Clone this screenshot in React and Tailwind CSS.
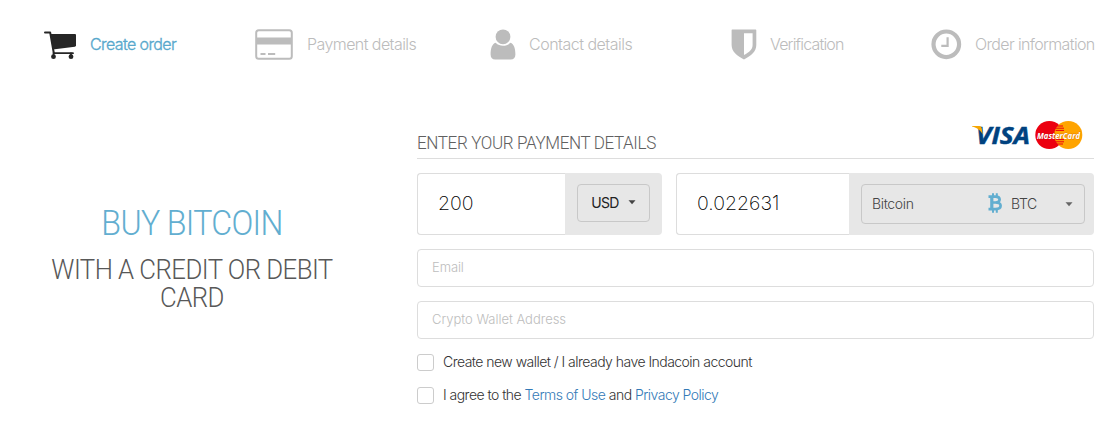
import { useState } from 'react';

function CartIcon() {
  return (
    <svg width="33" height="31" viewBox="0 0 33 31" fill="#262626">
      <path d="M1 3.6H6.2L9.8 24" fill="none" stroke="#262626" strokeWidth="2" strokeLinecap="round" strokeLinejoin="round" />
      <path d="M6.4 5H31Q32 5 32 6.1V16.3Q32 17.6 30.8 17.8L8.8 20.4Z" />
      <path d="M9.6 24.2H29M9.6 24V26.5M27 24V26.5" fill="none" stroke="#262626" strokeWidth="1.8" strokeLinecap="round" />
      <circle cx="9.5" cy="27.7" r="2.4" />
      <circle cx="27" cy="27.7" r="2.4" />
    </svg>
  );
}

function CardIcon() {
  return (
    <svg width="38" height="31" viewBox="0 0 38 31" fill="#bcbcbc">
      <rect x="1.2" y="1.2" width="35.6" height="28.6" rx="2.5" fill="none" stroke="#bcbcbc" strokeWidth="2" />
      <path d="M1 8.5h36v7H1zM5.5 24h5v2h-5zM13 24h7.2v2H13z" />
    </svg>
  );
}

function PersonIcon() {
  return (
    <svg width="26" height="31" viewBox="0 0 26 31" fill="#bcbcbc">
      <circle cx="13" cy="7.8" r="7.4" />
      <path d="M5.6 13.8C8 16 10.2 16.7 13 16.7S18 16 20.4 13.8C24 15 25.4 19.5 25.4 25.5C25.4 28.7 23.5 30.5 20.8 30.5H5.2C2.4 30.5.6 28.7.6 25.5C.6 19.5 2 15 5.6 13.8Z" />
    </svg>
  );
}

function ShieldIcon() {
  return (
    <svg width="26" height="31" viewBox="0 0 26 31" fill="#bcbcbc">
      <path fillRule="evenodd" d="M1.2.5H24.6Q25.3.5 25.3 1.2V16C25.3 22.5 20.2 26.8 13 30.5C5.8 26.8.6 22.5.6 16V1.2Q.6.5 1.2.5ZM13 4.2V26C18.5 23 21.6 20.4 21.6 16V4.2Z" />
    </svg>
  );
}

function ClockIcon() {
  return (
    <svg width="31" height="31" viewBox="0 0 31 31" fill="none" stroke="#bcbcbc">
      <circle cx="15.3" cy="15.3" r="12.8" strokeWidth="4.2" />
      <path d="M16.6 8.3V16.8H10.3" strokeWidth="2.2" />
    </svg>
  );
}

function BitcoinIcon() {
  return (
    <svg width="15" height="20" viewBox="0 0 15 20" fill="none" stroke="#62aed0">
      <path d="M.5 3.7H7.5C13 3.7 13 9.5 7.5 9.5H4.4M7.5 9.5C14.3 9.5 14.3 16.1 7.5 16.1H.5" strokeWidth="2.7" />
      <path d="M3.8 3V17" strokeWidth="3.2" />
      <path d="M5 .3V3.5M8.8 .3V3.5M5 16.5V19.7M8.8 16.5V19.7" strokeWidth="2" />
    </svg>
  );
}

function CardLogos() {
  return (
    <svg width="111" height="30" viewBox="0 0 111 30" className="overflow-visible">
      <g fontFamily="'Open Sans', sans-serif" fontStyle="italic" fontWeight="700">
        <text x="4" y="23.5" fontSize="24" textLength="54" lengthAdjust="spacingAndGlyphs" fill="#00427f" stroke="#00427f" strokeWidth=".5">VISA</text>
        <path d="M0 6H7.2Q9.3 6 9.7 8L10.8 14.5C8.6 10.6 5.4 7.8 0 6.6Z" fill="#f7a600" />
        <circle cx="77.3" cy="15" r="14" fill="#ec0010" />
        <circle cx="96.3" cy="15" r="14" fill="#ffa400" />
        <path d="M83.6 6H91M83.6 8.2H92M83.6 10.4H92M83.6 19.6H92M83.6 21.8H92M84.5 24H91" stroke="#ec0010" strokeWidth="1" />
        <text x="65" y="18.5" fontSize="9" textLength="43" lengthAdjust="spacingAndGlyphs" fill="#fff" stroke="#b2301b" strokeWidth=".3" paintOrder="stroke">MasterCard</text>
      </g>
    </svg>
  );
}

function Caret({ className }) {
  return (
    <svg width="8" height="5" viewBox="0 0 8 5" className={className} fill="currentColor">
      <path d="M.5 .3H7.5L4 4.2Z" />
    </svg>
  );
}

const steps = [
  { label: 'Create order', icon: CartIcon, item: 'w-[211px]', box: 'w-[46px]', text: 'text-[#58a8cc] tracking-[-0.6px] [-webkit-text-stroke:0.35px]' },
  { label: 'Payment details', icon: CardIcon, item: 'w-[235px]', box: 'w-[52px]', text: 'text-[#bcbcbc] tracking-[-0.57px]' },
  { label: 'Contact details', icon: PersonIcon, item: 'w-[241px]', box: 'w-[39px]', text: 'text-[#bcbcbc] tracking-[-0.5px]' },
  { label: 'Verification', icon: ShieldIcon, item: 'w-[200px]', box: 'w-[39px]', text: 'text-[#bcbcbc] tracking-[-0.82px]' },
  { label: 'Order information', icon: ClockIcon, item: 'w-[180px]', box: 'w-[44px]', text: 'text-[#bcbcbc] tracking-[-0.65px]' },
];

function Checkbox({ checked, onChange, children }) {
  return (
    <label className="flex h-[17px] items-center gap-[9px] whitespace-nowrap text-[14px] leading-[17px] tracking-[-0.53px] text-[#333]">
      <input
        type="checkbox"
        checked={checked}
        onChange={onChange}
        className="size-[17px] shrink-0 appearance-none rounded-[3px] border border-[#ccc] checked:bg-[#58a8cc]"
      />
      <span className="pb-[2px]">{children}</span>
    </label>
  );
}

export default function App() {
  const [amount, setAmount] = useState('200');
  const [coins, setCoins] = useState('0.022631');
  const [newWallet, setNewWallet] = useState(false);
  const [agree, setAgree] = useState(false);

  return (
    <main className="h-[440px] w-[1111px] overflow-hidden bg-white font-['Liberation_Sans',sans-serif]">
      <nav className="flex h-[88px] pl-[44px]">
        {steps.map(({ label, icon: Icon, item, box, text }) => (
          <div key={label} className={`flex h-full shrink-0 items-center ${item}`}>
            <span className={`shrink-0 ${box}`}>
              <Icon />
            </span>
            <span className={`whitespace-nowrap pb-px font-['Inter',sans-serif] text-[16px] font-light ${text}`}>{label}</span>
          </div>
        ))}
      </nav>

      <div className="flex">
        <section className="w-[417px] shrink-0 pl-[30.5px] pt-[114px]">
          <div className="w-[322px] scale-x-[0.92] whitespace-nowrap text-center font-['Roboto',sans-serif] font-light">
            <h1 className="text-[35px] leading-[44px] tracking-[-0.75px] text-[#62aed0]">BUY BITCOIN</h1>
            <h2 className="mt-[10px] text-[28px] leading-[28px] tracking-[-0.6px] text-[#585858]">
              WITH A CREDIT OR DEBIT
              <br />
              CARD
            </h2>
          </div>
        </section>

        <form className="w-[677px] pt-[32px] font-['Inter',sans-serif] font-light" onSubmit={(event) => event.preventDefault()}>
          <div className="flex h-[39px] justify-between border-b border-[#ddd] pr-[11px]">
            <h3 className="origin-left scale-x-[0.947] pt-[11px] font-['Roboto',sans-serif] text-[18px] leading-[24px] tracking-[-0.4px] text-[#606060]">
              ENTER YOUR PAYMENT DETAILS
            </h3>
            <CardLogos />
          </div>

          <div className="mt-[14px] flex gap-[14px]">
            <div className="flex h-[62px] w-[245px] rounded bg-[#e7e7e7]">
              <input
                value={amount}
                onChange={(event) => setAmount(event.target.value)}
                className="w-[148px] rounded-l border border-r-0 border-[#ddd] bg-white pl-[20px] text-[19.5px] font-extralight text-black outline-none"
              />
              <button type="button" className="ml-3 mt-[11px] flex h-[38px] w-[73px] items-center justify-center gap-[9px] rounded border border-[#c8c8c8] pb-px text-[14px] font-normal tracking-[-0.6px] text-[#222]">
                USD <Caret className="text-[#444]" />
              </button>
            </div>

            <div className="flex h-[62px] w-[418px] rounded bg-[#e7e7e7]">
              <input
                value={coins}
                onChange={(event) => setCoins(event.target.value)}
                className="w-[173px] rounded-l border border-r-0 border-[#ddd] bg-white pl-[20px] text-[19.5px] font-extralight text-black outline-none"
              />
              <button type="button" className="ml-3 mt-[11px] flex h-10 w-[224px] items-center rounded border border-[#c8c8c8] px-[10px] pb-[2px] text-[14px] tracking-[-0.35px] text-[#444]">
                <span className="w-[116px] text-left">Bitcoin</span>
                <BitcoinIcon />
                <span className="ml-[8px]">BTC</span>
                <Caret className="ml-auto mr-px mt-[2px] text-[#666]" />
              </button>
            </div>
          </div>

          <input
            type="email"
            placeholder="Email"
            className="mt-[14px] block h-[38px] w-full rounded border border-[#ddd] px-[14px] pb-[2px] text-[13px] tracking-[-0.1px] outline-none placeholder:text-[#bdbdbd]"
          />
          <input
            placeholder="Crypto Wallet Address"
            className="mt-[14px] block h-[38px] w-full rounded border border-[#ddd] px-[14px] pb-[2px] text-[13px] tracking-[-0.02px] outline-none placeholder:text-[#bdbdbd]"
          />

          <div className="mt-[15px] flex flex-col gap-4">
            <Checkbox checked={newWallet} onChange={() => setNewWallet((old) => !old)}>
              Create new wallet / I already have Indacoin account
            </Checkbox>
            <Checkbox checked={agree} onChange={() => setAgree((old) => !old)}>
              I agree to the <a href="#terms" className="text-[#337ab7]">Terms of Use</a> and{' '}
              <a href="#privacy" className="text-[#337ab7]">Privacy Policy</a>
            </Checkbox>
          </div>
        </form>
      </div>
    </main>
  );
}
